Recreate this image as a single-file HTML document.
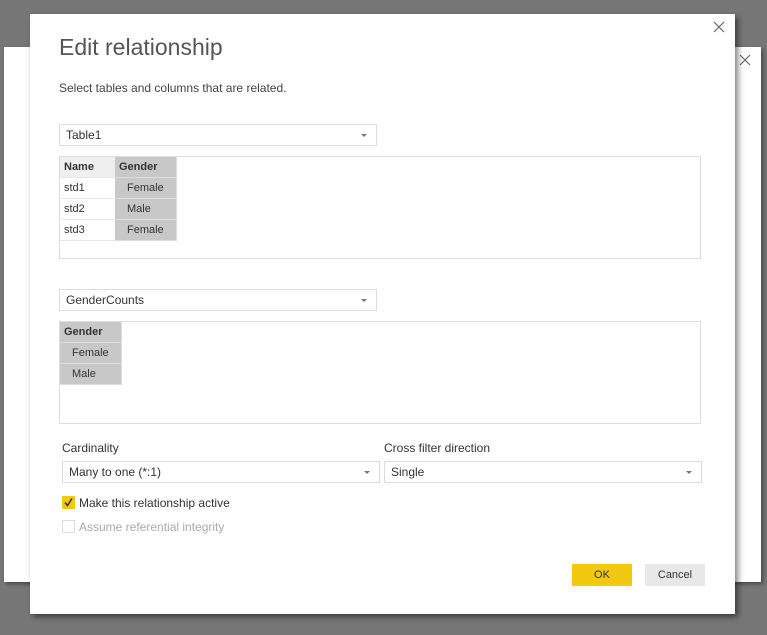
<!DOCTYPE html>
<html><head><style>
*{margin:0;padding:0;box-sizing:border-box}
body{width:767px;height:635px;background:#777;position:relative;overflow:hidden;font-family:"Liberation Sans",sans-serif;color:#333}
.abs{position:absolute}
.back{left:4px;top:47px;width:757px;height:535px;background:#fff;box-shadow:2px 2px 4px rgba(0,0,0,.4)}
.front{left:30px;top:14px;width:705px;height:600px;background:#fff;box-shadow:3px 3px 6px rgba(0,0,0,.5)}
.sel{border:1px solid #ddd;background:#fff;font-size:12px;padding-left:6px;line-height:20px;height:22px}
.sel:after{content:"";position:absolute;right:9px;top:9px;border-left:3px solid transparent;border-right:3px solid transparent;border-top:3px solid #777}
.box{border:1px solid #ddd}
.c{position:absolute;font-size:11px;height:21px;line-height:20px;border-right:1px solid #e8e8e8;border-bottom:1px solid #e8e8e8;padding-left:4px}
.g{background:#c8c8c8;border-color:#ddd}
.b{font-weight:bold}
.lbl{font-size:12px}
</style></head><body>
<div class="abs back"></div>
<svg class="abs" style="left:739px;top:54px" width="12" height="12"><path d="M1 1L11 11M11 1L1 11" stroke="#666" stroke-width="1.2"/></svg>
<div class="abs front"></div>
<svg class="abs" style="left:713px;top:21px" width="12" height="12"><path d="M1 1L11 11M11 1L1 11" stroke="#666" stroke-width="1.2"/></svg>
<div class="abs" style="left:59px;top:34px;font-size:23px;color:#555">Edit relationship</div>
<div class="abs lbl" style="left:59px;top:81px;color:#444">Select tables and columns that are related.</div>

<div class="abs sel" style="left:59px;top:124px;width:318px">Table1</div>
<div class="abs box" style="left:59px;top:156px;width:642px;height:103px">
<div class="c b" style="left:0;top:0;width:56px;background:#efefef">Name</div>
<div class="c b g" style="left:55px;top:0;width:62px">Gender</div>
<div class="c" style="left:0;top:21px;width:56px">std1</div>
<div class="c g" style="left:55px;top:21px;width:62px;padding-left:12px">Female</div>
<div class="c" style="left:0;top:42px;width:56px">std2</div>
<div class="c g" style="left:55px;top:42px;width:62px;padding-left:12px">Male</div>
<div class="c" style="left:0;top:63px;width:56px">std3</div>
<div class="c g" style="left:55px;top:63px;width:62px;padding-left:12px">Female</div>
</div>

<div class="abs sel" style="left:59px;top:289px;width:318px">GenderCounts</div>
<div class="abs box" style="left:59px;top:321px;width:642px;height:103px">
<div class="c b g" style="left:0;top:0;width:62px">Gender</div>
<div class="c g" style="left:0;top:21px;width:62px;padding-left:12px">Female</div>
<div class="c g" style="left:0;top:42px;width:62px;padding-left:12px">Male</div>
</div>

<div class="abs lbl" style="left:62px;top:441px">Cardinality</div>
<div class="abs lbl" style="left:384px;top:441px">Cross filter direction</div>
<div class="abs sel" style="left:62px;top:461px;width:318px">Many to one (*:1)</div>
<div class="abs sel" style="left:384px;top:461px;width:318px">Single</div>

<div class="abs" style="left:62px;top:496px;width:13px;height:13px;background:#f2c811"><svg width="13" height="13"><path d="M3 6.5L5.5 9.5L10 2.5" fill="none" stroke="#333" stroke-width="1.5"/></svg></div>
<div class="abs lbl" style="left:79px;top:496px">Make this relationship active</div>
<div class="abs" style="left:62px;top:520px;width:13px;height:13px;border:1px solid #ddd"></div>
<div class="abs lbl" style="left:79px;top:520px;color:#aaa">Assume referential integrity</div>

<div class="abs" style="left:572px;top:564px;width:60px;height:22px;background:#f2c811;font-size:11px;line-height:22px;text-align:center">OK</div>
<div class="abs" style="left:645px;top:564px;width:60px;height:22px;background:#e8e8e8;font-size:11px;line-height:22px;text-align:center">Cancel</div>
</body></html>
